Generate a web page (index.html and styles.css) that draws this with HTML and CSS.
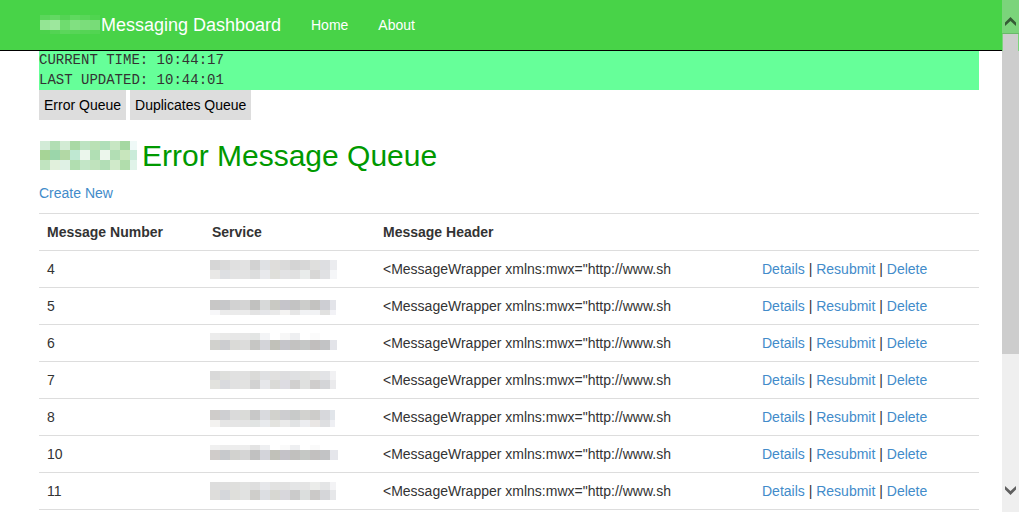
FILE: index.html
```html
<!DOCTYPE html>
<html lang="en">
<head>
<meta charset="utf-8">
<title>Messaging Dashboard</title>
<link rel="stylesheet" href="styles.css">
</head>
<body>
<header class="navbar">
  <a class="brand"><svg class="mosaic" data-mosaic="brand" width="62" height="20"></svg><span>Messaging Dashboard</span></a>
  <nav class="nav"><a>Home</a><a>About</a></nav>
</header>
<main class="container">
  <div class="clock"><div>CURRENT TIME: 10:44:17</div><div>LAST UPDATED: 10:44:01</div></div>
  <div class="queues"><a class="queue">Error Queue</a><a class="queue">Duplicates Queue</a></div>
  <h2 class="title"><svg class="mosaic" data-mosaic="title" width="98" height="30"></svg><span>Error Message Queue</span></h2>
  <p class="create"><a class="link">Create New</a></p>
  <table class="table">
    <colgroup><col class="col-number"><col class="col-service"><col class="col-header"><col class="col-actions"></colgroup>
    <thead><tr><th>Message Number</th><th>Service</th><th>Message Header</th><th></th></tr></thead>
    <tbody>
      <tr><td>4</td><td><svg class="mosaic service" data-mosaic="4"></svg></td><td>&lt;MessageWrapper xmlns:mwx="http://www.sh</td><td><a class="link">Details</a> | <a class="link">Resubmit</a> | <a class="link">Delete</a></td></tr>
      <tr><td>5</td><td><svg class="mosaic service" data-mosaic="5"></svg></td><td>&lt;MessageWrapper xmlns:mwx="http://www.sh</td><td><a class="link">Details</a> | <a class="link">Resubmit</a> | <a class="link">Delete</a></td></tr>
      <tr><td>6</td><td><svg class="mosaic service" data-mosaic="6"></svg></td><td>&lt;MessageWrapper xmlns:mwx="http://www.sh</td><td><a class="link">Details</a> | <a class="link">Resubmit</a> | <a class="link">Delete</a></td></tr>
      <tr><td>7</td><td><svg class="mosaic service" data-mosaic="7"></svg></td><td>&lt;MessageWrapper xmlns:mwx="http://www.sh</td><td><a class="link">Details</a> | <a class="link">Resubmit</a> | <a class="link">Delete</a></td></tr>
      <tr><td>8</td><td><svg class="mosaic service" data-mosaic="8"></svg></td><td>&lt;MessageWrapper xmlns:mwx="http://www.sh</td><td><a class="link">Details</a> | <a class="link">Resubmit</a> | <a class="link">Delete</a></td></tr>
      <tr><td>10</td><td><svg class="mosaic service" data-mosaic="10"></svg></td><td>&lt;MessageWrapper xmlns:mwx="http://www.sh</td><td><a class="link">Details</a> | <a class="link">Resubmit</a> | <a class="link">Delete</a></td></tr>
      <tr><td>11</td><td><svg class="mosaic service" data-mosaic="11"></svg></td><td>&lt;MessageWrapper xmlns:mwx="http://www.sh</td><td><a class="link">Details</a> | <a class="link">Resubmit</a> | <a class="link">Delete</a></td></tr>
    </tbody>
  </table>
</main>
<div class="scrollbar">
  <div class="scroll-up"><svg width="11" height="9" viewBox="0 0 11 9"><path d="M0 5.500 5.500 0 11 5.500V9L5.500 4 0 9Z" fill="#355c35"/></svg></div>
  <div class="scroll-thumb"></div>
  <div class="scroll-down"><svg width="11" height="9" viewBox="0 0 11 9"><path d="M0 0 5.500 5 11 0V3.500L5.500 9 0 3.500Z" fill="#606060"/></svg></div>
</div>
<script src="mosaic.js"></script>
</body>
</html>
```
FILE: styles.css
```css
* { box-sizing: border-box; }
body {
  margin: 0;
  height: 512px;
  overflow: hidden;
  background: #fff;
  color: #333;
  font: 14px/20px "Liberation Sans", Arial, sans-serif;
}
.navbar {
  display: flex;
  align-items: center;
  height: 51px;
  padding-left: 39px;
  background: #48d348;
  border-bottom: 1px solid #000;
  color: #fff;
}
.brand { display: flex; align-items: center; width: 257px; font-size: 18px; white-space: nowrap; }
.nav { display: flex; }
.nav a { padding: 0 15px; }
.mosaic { display: block; flex: none; overflow: visible; shape-rendering: crispEdges; }
.container { width: 940px; margin-left: 39px; }
.clock {
  height: 39px;
  background: #6f9;
  font-family: "Liberation Mono", "Courier New", monospace;
  font-size: 14px;
}
.clock div { height: 20px; line-height: 18px; }
.queues { display: flex; gap: 4px; }
.queue { height: 30px; padding: 5px; background: #ddd; color: #000; }
.title {
  display: flex;
  align-items: center;
  gap: 5px;
  height: 33px;
  margin: 20px 0 10px;
  color: #090;
  font-size: 30px;
  font-weight: 400;
  line-height: 33px;
}
.title span { margin-top: -2px; }
.title .mosaic { margin-top: -1px; }
.create { margin: 0 0 10px; }
.link { color: #428bca; }
.table { width: 940px; table-layout: fixed; border-collapse: separate; border-spacing: 0; border-bottom: 1px solid #ddd; }
.table th, .table td { height: 37px; padding: 8px; border-top: 1px solid #ddd; text-align: left; white-space: nowrap; }
.col-number { width: 165px; }
.col-service { width: 171px; }
.col-header { width: 379px; }
.col-actions { width: 225px; }
.service { width: 128px; height: 20px; margin-left: -2px; }
.scrollbar {
  position: absolute;
  top: 0;
  right: 0;
  display: flex;
  flex-direction: column;
  width: 17px;
  height: 512px;
  background: #efefef;
}
.scroll-up { height: 33px; padding: 17px 0 0 3px; background: #7bd47b; }
.scroll-thumb {
  height: 321px;
  border-top: 1px solid #69b969;
  background: linear-gradient(90deg, #7bd47b 1px, #cdcdcd 1px 16px, #7bd47b 16px) 0 0 / 100% 17px no-repeat #cdcdcd;
}
.scroll-down { margin-top: auto; height: 26px; padding-left: 3px; }
.scroll-up svg, .scroll-down svg { display: block; }
```
FILE: mosaic.js
```js
// Each mosaic: left offset, top offset, row heights, width of the last cell, cell colours.
const mosaics = {
  brand: [1, 0, [5, 10, 4], 10, [
    "5bd65b 63d863 55d355 5fd95f 59d659 50d450",
    "94e594 9de79d 6fdc6f 81e081 7bdd7b 78dc78",
    "4bd24b 53d353 5bd65b 57d557 55d455 52d452"]],
  title: [1, 0, [9, 10, 10], 7, [
    "d2ebd7 b2deb4 d2ebd4 a9d9a5 bde3c2 bae1b5 b0dfb9 c7e6c3 a5d8a2 eff9f7",
    "a6d496 9bd6aa b2d8a5 bfe8d2 ebf6ec b1dfb4 ecf6ec b2deb4 c8e6bd c9ebd9",
    "c1e4c0 e1f0dc dff1e5 b1deb0 c3e6c7 c0e3bd b2deb6 d0eaca b1ddac e0f3e9"]],
  4: [0, 1, [10, 9], 7, [
    "d6d6d6 dadada e0e0e0 e2e2e2 d2d2d2 dfe1e4 dfdddb dadada d4d4d4 d7d7d7 dfdfdd dddee1 ebecef",
    "e9e8e6 dddfe2 e3e3e3 e2e2e2 dcdddd e8e9ec dfdfda e2e2e4 e0e0e0 e9eceb d8d7d6 e0e1e3 f5f6f8"]],
  5: [0, 4, [10, 5], 6, [
    "c8c7c6 c7c8ca d2d2d2 d4d4d4 c1c1bf d7d9d9 c9c9c3 c5c4ca c3c3c3 cccdcb c3c2c0 cdced3 e3e4e9",
    "f7f7f9 ebebeb ebebeb ebebeb e3e3e3 e5e6e9 e9e9e9 f4f3f2 e6e6e6 f1f2f4 f1f2f4 e1e1e0 f2f2f6"]],
  6: [0, 0, [7, 10], 7, [
    "ececec e9e9e8 e7e7e7 e7e7e7 e3e5e4 f3f4f6 ffffff f7f7f7 eeeff1 ffffff fbfbfb ffffff ffffff",
    "d1d1cd cccdd0 dadad7 dcdcdb c6c6c4 d3d4d9 c1c1b9 c5c5ca c3c2c1 c5c7c6 c1bebd c2c3c5 e3e4e9"]],
  7: [0, 1, [9, 9], 6, [
    "d9d9d9 dedfdc e1e1e1 e0e0e0 dadad8 dfe0e2 e1e0df dddddf dfe0e2 dfe0df e3e3e2 e2e3e6 f1f1f3",
    "e2e2de d9dade e1e1e1 e2e2e1 d2d2d2 e6e7ea dadad7 dddce2 d1d0cf dfe0df cfcdcc d4d5d8 eaeaec"]],
  8: [0, 3, [10, 7], 5, [
    "cfccca cecfd2 dadada dadbd8 c8c8c8 d9dade d2d2cd cdcdd0 c8cac9 d2d2cf cdccca d7d8dc e1e5ea",
    "f3f2f0 e5e5e5 e5e5e5 e4e4e4 e1e4e3 e8eaed e3e3df eaeaea e1e3e4 ecedf0 e9e6e4 dedfe1 eeeff3"]],
  10: [0, 1, [5, 10], 8, [
    "f0f0f0 ededed ededed ededed e3e3e3 eeeff1 ffffff fafafa eeeff1 ffffff fafafa ffffff ffffff",
    "d0ccca c7c9cc d2d2cf d5d5d5 c1c1c1 d3d4da c1c1b9 c4c2c8 c1c0be c5c8c5 c2c0bf c2c3c5 e5e6eb"]],
  11: [0, 1, [8, 10], 6, [
    "dddddd dedede dfdfdd e1e2e1 dedede e6e7ea e2e2e1 e1e1e1 e4e5e6 e4e4e4 ebecea e4e5e6 f3f3f5",
    "dedddb d5d7db dfdfdb e1e2e1 cfcecb dcdee2 d7d7d2 d8d7dc cbcbcb dbdedd cbc9c8 d5d6d9 e6e7e9"]]
};

document.querySelectorAll("[data-mosaic]").forEach(svg => {
  const [left, top, heights, lastWidth, rows] = mosaics[svg.dataset.mosaic];
  let y = top;
  rows.forEach((row, r) => {
    const colors = row.split(" ");
    colors.forEach((color, c) => {
      const rect = document.createElementNS("http://www.w3.org/2000/svg", "rect");
      rect.setAttribute("x", left + c * 10);
      rect.setAttribute("y", y);
      rect.setAttribute("width", c === colors.length - 1 ? lastWidth : 10);
      rect.setAttribute("height", heights[r]);
      rect.setAttribute("fill", "#" + color);
      svg.appendChild(rect);
    });
    y += heights[r];
  });
});
```
